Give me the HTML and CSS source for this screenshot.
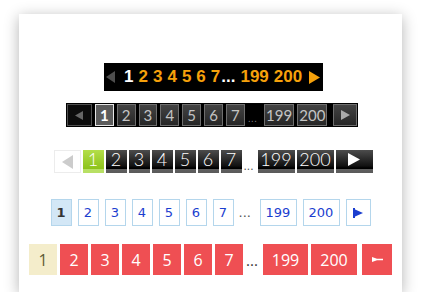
FILE: index.html
```html
<!DOCTYPE html>
<html lang="en">
<head>
    <meta charset="UTF-8">
    <meta name="viewport" content="width=device-width, initial-scale=1.0">
    <title>Pagination Styles</title>
    <link rel="stylesheet" href="styles.css">
</head>
<body>
    <div class="card">
        <!-- style 1: black strip, orange numbers -->
        <div class="pager-one">
            <span class="arrow prev"><svg width="9" height="12" viewBox="0 0 9 12"><polygon points="9,0 9,12 0,6" fill="#4d4d4d"/></svg></span>
            <span class="current">1</span>
            <span>2</span><span>3</span><span>4</span><span>5</span><span>6</span><span>7</span>
            <span class="dots">...</span>
            <span>199</span><span>200</span>
            <span class="arrow next"><svg width="11" height="13" viewBox="0 0 11 13"><polygon points="0,0 11,6.5 0,13" fill="#f6a10b"/></svg></span>
        </div>

        <!-- style 2: dark boxed -->
        <div class="pager-two">
            <a class="prev"><svg width="8" height="9" viewBox="0 0 8 9"><polygon points="8,0 8,9 0,4.5" fill="#666"/></svg></a>
            <a class="current">1</a>
            <a>2</a><a>3</a><a>4</a><a>5</a><a>6</a><a>7</a>
            <span class="dots">...</span>
            <a class="wide">199</a><a class="wide">200</a>
            <a class="next"><svg width="9" height="10" viewBox="0 0 9 10"><polygon points="0,0 9,5 0,10" fill="#aaa"/></svg></a>
        </div>

        <!-- style 3: glossy black -->
        <div class="pager-three">
            <a class="prev"><svg width="11" height="14" viewBox="0 0 11 14"><polygon points="11,0 11,14 0,7" fill="#ccc"/></svg></a>
            <a class="current">1</a>
            <a>2</a><a>3</a><a>4</a><a>5</a><a>6</a><a>7</a>
            <span class="dots">...</span>
            <a class="wide">199</a><a class="wide">200</a>
            <a class="wide next"><svg width="12" height="13" viewBox="0 0 12 13"><polygon points="0,0 12,6.5 0,13" fill="#fff"/></svg></a>
        </div>

        <!-- style 4: light blue outline -->
        <div class="pager-four">
            <a class="current">1</a>
            <a>2</a><a>3</a><a>4</a><a>5</a><a>6</a><a>7</a>
            <span class="dots">...</span>
            <a class="w199">199</a><a class="w200">200</a>
            <a class="next"><svg width="10" height="10" viewBox="0 0 10 10"><polygon points="1,1 10,5 1,9" fill="#1b3ecf"/><rect x="0" y="0" width="2" height="10" fill="#1b3ecf"/></svg></a>
        </div>

        <!-- style 5: red blocks -->
        <div class="pager-five">
            <a class="current">1</a>
            <a>2</a><a>3</a><a>4</a><a>5</a><a>6</a><a>7</a>
            <span class="dots">...</span>
            <a class="w199">199</a><a class="w200">200</a>
            <a class="next"><svg width="11" height="5" viewBox="0 0 11 5"><polygon points="0,0 5,1.8 11,1.8 11,3.2 5,3.2 0,5" fill="#fff"/></svg></a>
        </div>
    </div>
</body>
</html>
```

FILE: styles.css
```css
body {
    margin: 0;
    padding: 14px 19px 0;
    background-color: #fff;
}
.card {
    height: 278px;
    background: #fff;
    box-shadow: 0 3px 14px rgba(0, 0, 0, 0.3);
    display: flex;
    flex-direction: column;
    align-items: center;
    padding-top: 49px;
    box-sizing: border-box;
}
.card a {
    cursor: pointer;
}

/* 1 */
.pager-one {
    display: flex;
    align-items: center;
    width: 219px;
    height: 28px;
    box-sizing: border-box;
    padding-left: 2px;
    margin-left: 6px;
    gap: 5px;
    background: #000;
    color: #f6a10b;
    font: bold 17px "Liberation Sans", Arial, sans-serif;
}
.pager-one .current {
    color: #fff;
}
.pager-one .arrow {
    display: flex;
}
.pager-one .prev {
    margin-right: 4px;
}
.pager-one .dots {
    color: #fff;
    margin-left: -4px;
}
.pager-one .next {
    margin-left: 2px;
}

/* 2 */
.pager-two {
    display: flex;
    align-items: center;
    gap: 3px;
    width: 292px;
    height: 24px;
    box-sizing: border-box;
    padding: 1px;
    margin-top: 12px;
    margin-left: 3px;
    background: #000;
}
.pager-two a {
    width: 19px;
    height: 22px;
    box-sizing: border-box;
    border: 1px solid #6e6e6e;
    background: linear-gradient(#434343, #262626);
    color: #c4c4c4;
    font: 15px Lato, "Liberation Sans", Arial, sans-serif;
    display: flex;
    align-items: center;
    justify-content: center;
}
.pager-two .prev {
    width: 25px;
    background: #0c0c0c;
    border-color: #505050;
}
.pager-two .current {
    background: #5c5c5c;
    border-color: #e6e6e6;
    color: #fff;
    font-weight: bold;
}
.pager-two .dots {
    color: #777;
    font: 11px "Liberation Sans", Arial, sans-serif;
    width: 12px;
    padding-top: 6px;
    margin-right: 1px;
}
.pager-two .wide {
    width: 31px;
}
.pager-two .wide + .wide {
    width: 30px;
    margin-right: 3px;
}
.pager-two .next {
    width: 24px;
}

/* 3 */
.pager-three {
    display: flex;
    align-items: flex-start;
    gap: 2px;
    margin-top: 23px;
    margin-left: 5px;
}
.pager-three a {
    width: 21px;
    height: 23px;
    box-sizing: border-box;
    padding-bottom: 4px;
    background: linear-gradient(#4c4c4c 0, #111 16px, #000 18px, #000 19px, #5f5f5f 19px, #5a5a5a 100%);
    color: #fff;
    font: 300 18px/19px Lato, "Liberation Sans", Arial, sans-serif;
    display: flex;
    align-items: center;
    justify-content: center;
}
.pager-three .prev {
    width: 27px;
    background: #fff;
    border: 1px solid #ececec;
    padding-bottom: 0;
}
.pager-three .current {
    background: linear-gradient(#b3de4a 0, #8fc41d 18px, #8ec21c 19px, #b8e064 19px, #b8e064 100%);
}
.pager-three .dots {
    color: #555;
    font: 12px "Liberation Sans", Arial, sans-serif;
    width: 12px;
    padding-top: 9px;
}
.pager-three .wide {
    width: 37px;
}

/* 4 */
.pager-four {
    display: flex;
    align-items: center;
    gap: 6px;
    margin-top: 26px;
}
.pager-four a {
    width: 21px;
    height: 27px;
    box-sizing: border-box;
    border: 1px solid #b4d6ec;
    background: #fff;
    color: #1b3ecf;
    font: 13px "DejaVu Sans", Verdana, sans-serif;
    display: flex;
    align-items: center;
    justify-content: center;
}
.pager-four .current {
    background: #d3e7f6;
    color: #333;
    font-weight: bold;
}
.pager-four .dots {
    color: #555;
    font: 13px "DejaVu Sans", Verdana, sans-serif;
    width: 16px;
    margin: 0 -1px;
}
.pager-four .w199 {
    width: 37px;
}
.pager-four .w200 {
    width: 37px;
}
.pager-four .next {
    width: 25px;
}

/* 5 */
.pager-five {
    display: flex;
    align-items: center;
    gap: 3px;
    margin-top: 18px;
}
.pager-five a {
    width: 28px;
    height: 31px;
    background: #ef4f53;
    color: #fff;
    font: 16px "Open Sans", sans-serif;
    display: flex;
    align-items: center;
    justify-content: center;
}
.pager-five .current {
    background: #f4edcb;
    color: #5d5a36;
}
.pager-five .dots {
    color: #333;
    font: 15px "Open Sans", sans-serif;
    width: 14px;
}
.pager-five .w199 {
    width: 45px;
}
.pager-five .w200 {
    width: 46px;
    margin-right: 2px;
}
.pager-five .next {
    width: 30px;
}
```
